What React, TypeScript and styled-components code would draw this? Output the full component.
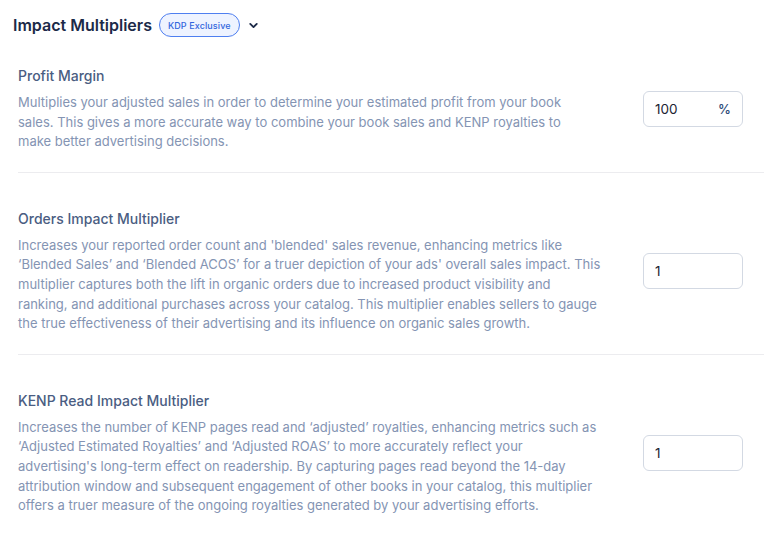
import styled, { createGlobalStyle } from "styled-components";

const GlobalStyle = createGlobalStyle`
    * {
        box-sizing: border-box;
    }
    body {
        margin: 0;
        background: #ffffff;
        font-family: Inter, "Noto Sans", sans-serif;
    }
`;

const Page = styled.div`
    width: 764px;
    padding: 13px 0 0 0;
`;

const Header = styled.div`
    display: flex;
    align-items: center;
    gap: 7px;
    padding-left: 13px;
    height: 24px;
`;

const HeaderTitle = styled.h2`
    margin: 0;
    font-size: 16px;
    font-weight: 600;
    color: #1c2a48;
`;

const Badge = styled.span`
    display: inline-flex;
    align-items: center;
    height: 24px;
    padding: 0 8px;
    border: 1px solid #4f7ff0;
    border-radius: 12px;
    background: #eef3ff;
    color: #3366dd;
    font-size: 9px;
    font-weight: 500;
    letter-spacing: 0.1px;
`;

const Chevron = styled.span`
    display: inline-flex;
    align-items: center;
    color: #1c2a48;
`;

const Section = styled.section<{ $first?: boolean; $last?: boolean }>`
    display: flex;
    align-items: center;
    justify-content: space-between;
    margin-left: 18px;
    padding: ${(p) => (p.$first ? "29px" : "36px")} 21px 20px 0;
    border-bottom: ${(p) => (p.$last ? "none" : "1px solid #ececef")};
`;

const TextBlock = styled.div<{ $width: number }>`
    flex: 0 0 584px;
    max-width: ${(p) => p.$width}px;
`;

const Title = styled.h3`
    margin: 0 0 7px;
    font-size: 14px;
    line-height: 20px;
    font-weight: 500;
    color: #4a5d82;
`;

const Description = styled.p`
    margin: 0;
    font-size: 13px;
    line-height: 19.6px;
    color: #8494b3;
`;

const InputBox = styled.label`
    display: flex;
    align-items: center;
    width: 100px;
    height: 36px;
    padding: 0 11px;
    border: 1px solid #d3d9e3;
    border-radius: 6px;
    background: #fff;
`;

const NumberInput = styled.input`
    flex: 1;
    min-width: 0;
    border: none;
    outline: none;
    padding: 0;
    font-family: Inter, "Noto Sans", sans-serif;
    font-size: 13.5px;
    color: #1c2433;
    background: transparent;
`;

const Suffix = styled.span`
    font-size: 13px;
    font-weight: 500;
    color: #2d4a78;
`;

const sections = [
    {
        title: "Profit Margin",
        text: "Multiplies your adjusted sales in order to determine your estimated profit from your book sales. This gives a more accurate way to combine your book sales and KENP royalties to make better advertising decisions.",
        value: "100",
        suffix: "%",
        width: 576,
    },
    {
        title: "Orders Impact Multiplier",
        text: "Increases your reported order count and 'blended' sales revenue, enhancing metrics like \u2018Blended Sales\u2019 and \u2018Blended ACOS\u2019 for a truer depiction of your ads' overall sales impact. This multiplier captures both the lift in organic orders due to increased product visibility and ranking, and additional purchases across your catalog. This multiplier enables sellers to gauge the true effectiveness of their advertising and its influence on organic sales growth.",
        value: "1",
        width: 584,
    },
    {
        title: "KENP Read Impact Multiplier",
        text: "Increases the number of KENP pages read and \u2018adjusted\u2019 royalties, enhancing metrics such as \u2018Adjusted Estimated Royalties\u2019 and \u2018Adjusted ROAS\u2019 to more accurately reflect your advertising's long-term effect on readership. By capturing pages read beyond the 14-day attribution window and subsequent engagement of other books in your catalog, this multiplier offers a truer measure of the ongoing royalties generated by your advertising efforts.",
        value: "1",
        width: 584,
    },
];

export default function App() {
    return (
        <>
            <GlobalStyle />
            <Page>
                <Header>
                    <HeaderTitle>Impact Multipliers</HeaderTitle>
                    <Badge>KDP Exclusive</Badge>
                    <Chevron>
                        <svg width="13" height="13" viewBox="0 0 24 24" fill="none" stroke="currentColor" strokeWidth="3.4" strokeLinecap="round" strokeLinejoin="round">
                            <path d="M6 9l6 6 6-6" />
                        </svg>
                    </Chevron>
                </Header>
                {sections.map((s, i) => (
                    <Section key={s.title} $first={i === 0} $last={i === sections.length - 1}>
                        <TextBlock $width={s.width}>
                            <Title>{s.title}</Title>
                            <Description>{s.text}</Description>
                        </TextBlock>
                        <InputBox>
                            <NumberInput defaultValue={s.value} />
                            {s.suffix && <Suffix>{s.suffix}</Suffix>}
                        </InputBox>
                    </Section>
                ))}
            </Page>
        </>
    );
}
